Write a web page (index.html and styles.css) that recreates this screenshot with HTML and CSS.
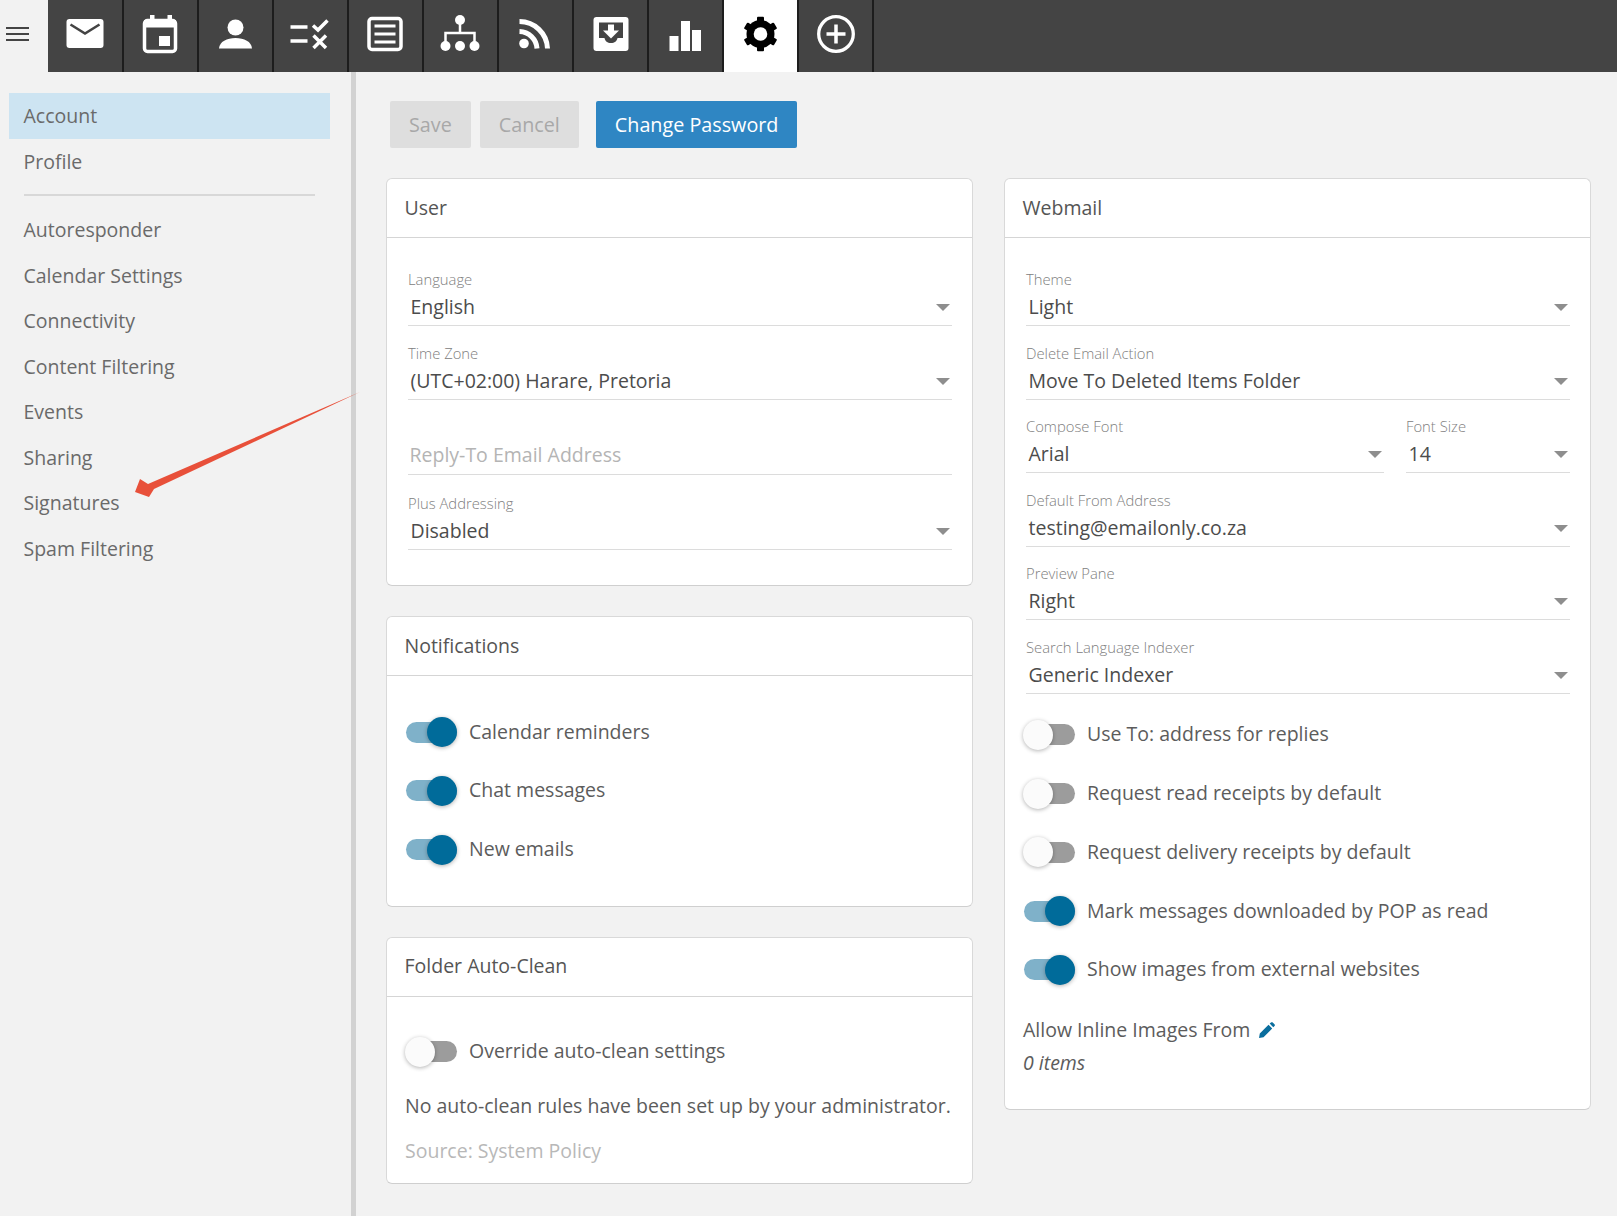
FILE: index.html
```html
<!DOCTYPE html>
<html lang="en">
<head>
<meta charset="utf-8">
<title>Settings</title>
<link rel="stylesheet" href="styles.css">
</head>
<body>
<div class="app">
  <header class="topbar">
    <div class="menu"><svg width="23" height="16" viewBox="0 0 23 16"><path d="M0 2H23M0 8H23M0 14H23" stroke="#444" stroke-width="2"/></svg></div>
    <nav class="tabs">
      <a class="tab"><svg class="ico" viewBox="0 0 48 48"><rect x="5.5" y="7" width="37" height="29" rx="3" fill="#fff"/><path d="M9.5 12.5L24 21.5L38.5 12.5" fill="none" stroke="#444" stroke-width="2.6"/></svg></a>
      <a class="tab"><svg class="ico" viewBox="0 0 48 48"><path d="M14 3h4.500v5h-4.500zM31.500 3h4.500v5h-4.500z" fill="#fff"/><rect x="8.500" y="8.500" width="31" height="31" rx="3" fill="none" stroke="#fff" stroke-width="3.500"/><rect x="8" y="8" width="32" height="7.500" fill="#fff"/><rect x="23" y="24" width="11" height="10" fill="#fff"/></svg></a>
      <a class="tab"><svg class="ico" viewBox="0 0 48 48"><circle cx="24.500" cy="15.500" r="8" fill="#fff"/><path d="M8 36.500C8.500 29.500 16 26 24.500 26C33 26 40.500 29.500 41 36.500Z" fill="#fff"/></svg></a>
      <a class="tab"><svg class="ico" viewBox="0 0 48 48"><path d="M4.500 15H21.500M4.500 29H21.500" stroke="#fff" stroke-width="3.500"/><path d="M27 13.500L32 18L41.500 8.500" fill="none" stroke="#fff" stroke-width="3.500"/><path d="M27.500 23.500L40 36M40 23.500L27.500 36" stroke="#fff" stroke-width="3.500"/></svg></a>
      <a class="tab"><svg class="ico" viewBox="0 0 48 48"><rect x="8" y="6.500" width="32" height="31" rx="3" fill="none" stroke="#fff" stroke-width="3.500"/><path d="M13.500 14H34.500M13.500 22H34.500M13.500 30H34.500" stroke="#fff" stroke-width="3"/></svg></a>
      <a class="tab"><svg class="ico" viewBox="0 0 48 48"><circle cx="24" cy="8" r="5" fill="#fff"/><circle cx="9.500" cy="34" r="5" fill="#fff"/><circle cx="24" cy="34" r="5" fill="#fff"/><circle cx="38.500" cy="34" r="5" fill="#fff"/><path d="M24 8V21M9.500 30V21H38.500V30" fill="none" stroke="#fff" stroke-width="2.500"/></svg></a>
      <a class="tab"><svg class="ico" viewBox="0 0 48 48"><circle cx="13" cy="31.500" r="4.800" fill="#fff"/><path d="M8.500 9.500A28 28 0 0 1 36.500 36.500M8.500 19.500A18 18 0 0 1 26 36.500" fill="none" stroke="#fff" stroke-width="5"/></svg></a>
      <a class="tab"><svg class="ico" viewBox="0 0 48 48"><rect x="6.500" y="5" width="35" height="34" rx="3" fill="#fff"/><path d="M12 10.500H36V26H30.500C30 29 27.500 31 24 31C20.500 31 18 29 17.500 26H12Z" fill="#444"/><path d="M21 12.500h6v6h5l-8 8l-8-8h5z" fill="#fff"/></svg></a>
      <a class="tab"><svg class="ico" viewBox="0 0 48 48"><rect x="7.500" y="24" width="9" height="15" fill="#fff"/><rect x="19" y="9" width="9" height="30" fill="#fff"/><rect x="30" y="18" width="9" height="21" fill="#fff"/></svg></a>
      <a class="tab tab-on"><svg class="ico" viewBox="0 0 48 48"><g fill="#000"><circle cx="23.500" cy="22" r="14"/><rect x="20" y="4.800" width="7" height="34.400" rx="1"/><rect x="20" y="4.800" width="7" height="34.400" rx="1" transform="rotate(60 23.500 22)"/><rect x="20" y="4.800" width="7" height="34.400" rx="1" transform="rotate(120 23.500 22)"/></g><circle cx="23.500" cy="22" r="6.800" fill="#fff"/></svg></a>
      <a class="tab"><svg class="ico" viewBox="0 0 48 48"><circle cx="24" cy="22" r="17.300" fill="none" stroke="#fff" stroke-width="3.300"/><path d="M24 12.500V31.500M14.500 22H33.500" stroke="#fff" stroke-width="3.500"/></svg></a>
    </nav>
  </header>

  <div class="layout">
    <aside class="sidebar">
      <a class="side-item side-active">Account</a>
      <a class="side-item">Profile</a>
      <div class="side-rule"></div>
      <a class="side-item">Autoresponder</a>
      <a class="side-item">Calendar Settings</a>
      <a class="side-item">Connectivity</a>
      <a class="side-item">Content Filtering</a>
      <a class="side-item">Events</a>
      <a class="side-item">Sharing</a>
      <a class="side-item">Signatures</a>
      <a class="side-item">Spam Filtering</a>
    </aside>

    <main class="main">
      <div class="actions">
        <button class="btn btn-off">Save</button>
        <button class="btn btn-off btn-cancel">Cancel</button>
        <button class="btn btn-primary">Change Password</button>
      </div>

      <div class="columns">
        <div class="col">
          <section class="card">
            <h2 class="card-head">User</h2>
            <div class="card-body body-user">
              <div class="field"><div class="f-label">Language</div><div class="f-value">English<i class="caret"></i></div></div>
              <div class="field"><div class="f-label">Time Zone</div><div class="f-value">(UTC+02:00) Harare, Pretoria<i class="caret"></i></div></div>
              <div class="field field-tall"><div class="f-label"></div><div class="f-value f-placeholder">Reply-To Email Address</div></div>
              <div class="field field-tall"><div class="f-label">Plus Addressing</div><div class="f-value">Disabled<i class="caret"></i></div></div>
            </div>
          </section>

          <section class="card">
            <h2 class="card-head">Notifications</h2>
            <div class="card-body body-notify">
              <div class="toggle-row"><span class="toggle on"></span>Calendar reminders</div>
              <div class="toggle-row"><span class="toggle on"></span>Chat messages</div>
              <div class="toggle-row"><span class="toggle on"></span>New emails</div>
            </div>
          </section>

          <section class="card">
            <h2 class="card-head">Folder Auto-Clean</h2>
            <div class="card-body body-clean">
              <div class="toggle-row"><span class="toggle"></span>Override auto-clean settings</div>
              <p class="note">No auto-clean rules have been set up by your administrator.</p>
              <p class="source">Source: System Policy</p>
            </div>
          </section>
        </div>

        <div class="col">
          <section class="card">
            <h2 class="card-head">Webmail</h2>
            <div class="card-body body-webmail">
              <div class="field"><div class="f-label">Theme</div><div class="f-value">Light<i class="caret"></i></div></div>
              <div class="field"><div class="f-label">Delete Email Action</div><div class="f-value">Move To Deleted Items Folder<i class="caret"></i></div></div>
              <div class="field-pair">
                <div class="field"><div class="f-label">Compose Font</div><div class="f-value">Arial<i class="caret"></i></div></div>
                <div class="field"><div class="f-label">Font Size</div><div class="f-value">14<i class="caret"></i></div></div>
              </div>
              <div class="field"><div class="f-label">Default From Address</div><div class="f-value">testing@emailonly.co.za<i class="caret"></i></div></div>
              <div class="field"><div class="f-label">Preview Pane</div><div class="f-value">Right<i class="caret"></i></div></div>
              <div class="field"><div class="f-label">Search Language Indexer</div><div class="f-value">Generic Indexer<i class="caret"></i></div></div>
              <div class="toggles">
                <div class="toggle-row"><span class="toggle"></span>Use To: address for replies</div>
                <div class="toggle-row"><span class="toggle"></span>Request read receipts by default</div>
                <div class="toggle-row"><span class="toggle"></span>Request delivery receipts by default</div>
                <div class="toggle-row"><span class="toggle on"></span>Mark messages downloaded by POP as read</div>
                <div class="toggle-row"><span class="toggle on"></span>Show images from external websites</div>
              </div>
              <div class="inline-title">Allow Inline Images From<svg class="pencil" width="17" height="17" viewBox="0 0 17 17"><path d="M1 16L1.800 11.500L10.500 2.800L14.200 6.500L5.500 15.200ZM11.700 1.600L13 .5C13.500 0 14.200 0 14.700 .5L16.500 2.300C17 2.800 17 3.500 16.500 4L15.300 5.300Z" fill="#0a6e9e"/></svg></div>
              <div class="inline-items">0 items</div>
            </div>
          </section>
        </div>
      </div>
    </main>
  </div>

  <svg class="arrow" width="240" height="120" viewBox="0 0 240 120"><polygon points="225,7 19,104 14,112 0,107 5,94 13,99" fill="#e8503a"/></svg>
</div>
</body>
</html>
```

FILE: styles.css
```css
* { box-sizing: border-box; }
html, body { margin: 0; padding: 0; height: 100%; overflow: hidden; }
body { background: #f2f2f2; font-family: "Open Sans", "Noto Sans", sans-serif; font-size: 19.5px; color: #555; }

.app { position: relative; height: 1216px; display: flex; flex-direction: column; }

.topbar { display: flex; height: 72px; flex: none; }
.menu { width: 48px; display: flex; align-items: center; justify-content: center; padding-right: 13px; padding-bottom: 5px; background: #f2f2f2; }
.tabs { flex: 1; display: flex; background: #444; padding-left: .7px; }
.tab { width: 75.050px; height: 72px; display: flex; align-items: center; justify-content: center; border-right: 2px solid #1d1d1d; }
.tab-on { background: #fff; }
.ico { width: 48px; height: 48px; display: block; }

.layout { flex: 1; display: flex; min-height: 0; }

.sidebar { width: 356px; flex: none; border-right: 5px solid #d2d2d2; padding: 21px 21px 0 9px; display: flex; flex-direction: column; }
.side-item { height: 45.500px; display: flex; align-items: center; padding-left: 14.500px; color: #6a6a6a; }
.side-active { background: #cde4f2; }
.side-rule { height: 2px; background: #d8d8d8; margin: 10px 15px 11px 14.500px; }

.main { flex: 1; min-width: 0; padding: 29px 26px 0 30px; }

.actions { display: flex; padding-left: 4px; margin-bottom: 30px; }
.btn { height: 47px; border: 0; border-radius: 2px; font: inherit; font-size: 19.750px; padding: 0 19px; }
.btn-off { background: #dedede; color: #a8a8a8; margin-right: 9px; }
.btn-cancel { margin-right: 17px; }
.btn-primary { background: #2f86c3; color: #fff; padding: 0 19px; }

.columns { display: grid; grid-template-columns: 587px 587px; column-gap: 31px; align-items: start; }
.col { display: flex; flex-direction: column; gap: 30px; }

.card { background: #fff; border: 1px solid #d9d9d9; border-bottom-color: #cfcfcf; border-radius: 6px; }
.card-head { margin: 0; height: 59px; border-bottom: 1px solid #d5d5d5; padding: 0 0 2px 17.500px; display: flex; align-items: center; font-size: 19.5px; font-weight: 400; color: #555; }
.card-body { padding-left: 21px; padding-right: 20px; }

.body-user { padding-top: 15px; padding-bottom: 35px; }
.body-notify { padding-top: 26px; padding-bottom: 27px; }
.body-clean { padding-top: 25.500px; padding-bottom: 17px; }
.body-webmail { padding-top: 15px; padding-bottom: 31px; }

.field { height: 73.600px; padding-top: 16px; display: flex; flex-direction: column; }
.field-tall { height: 75.100px; padding-top: 18px; }
.f-label { height: 20px; line-height: 20px; font-size: 14.800px; font-weight: 300; color: #808080; }
.f-value { position: relative; height: 37px; line-height: 36px; border-bottom: 1px solid #dcdcdc; padding-left: 2.500px; color: #4c4c4c; }
.f-placeholder { color: #b4b4b4; padding-left: 1.500px; line-height: 33px; }
.caret { position: absolute; right: 2px; top: 15px; border-left: 7px solid transparent; border-right: 7px solid transparent; border-top: 7px solid #8e8e8e; }

.field-pair { display: grid; grid-template-columns: 358px 1fr; column-gap: 22px; }

.toggle-row { height: 58.800px; display: flex; align-items: center; color: #5c5c5c; margin-left: -2px; padding-bottom: 1.500px; }
.toggle { position: relative; top: 1px; width: 51px; height: 21px; margin-right: 12px; background: #9c9c9c; border-radius: 11px; flex: none; }
.toggle::before { content: ""; position: absolute; left: -1px; top: -4.500px; width: 30px; height: 30px; border-radius: 50%; background: #fbfbfb; box-shadow: 0 1px 4px rgba(0,0,0,.3); }
.toggle.on { background: #7fb1c9; }
.toggle.on::before { left: auto; right: 0; background: #006b9a; }

.toggles { margin-top: 10.500px; }

.note { margin: 10px 0 0 -3px; line-height: 30px; color: #5c5c5c; white-space: nowrap; }
.source { margin: 15px 0 0 -3px; line-height: 30px; color: #b8b8b8; }

.inline-title { margin-top: 16px; line-height: 30px; margin-left: -3px; color: #5c5c5c; display: flex; align-items: center; }
.pencil { margin-left: 8px; }
.inline-items { margin-top: 3px; line-height: 30px; margin-left: -3px; font-style: italic; color: #5c5c5c; }

.arrow { position: absolute; left: 135px; top: 385px; pointer-events: none; }
```
